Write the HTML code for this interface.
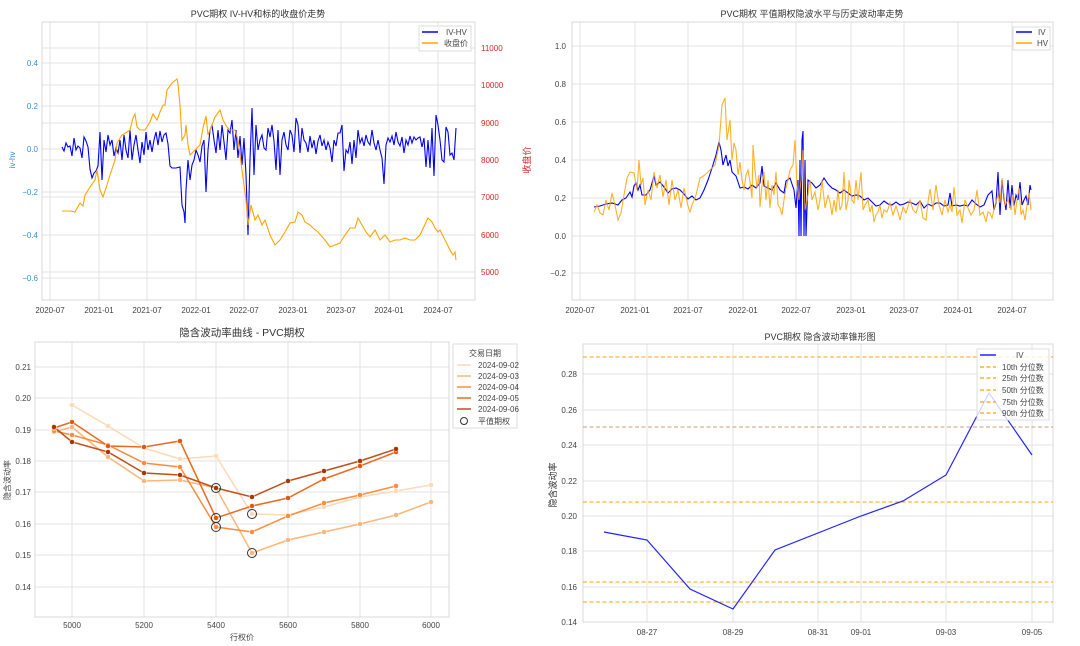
<!DOCTYPE html>
<html><head><meta charset="utf-8"><style>
html,body{margin:0;padding:0;background:#fff;}
svg{display:block;font-family:"Liberation Sans","Noto Sans CJK SC",sans-serif;}
.t{font-size:8px;fill:#444;}
.g{stroke:#e3e3e3;stroke-width:1;fill:none;}
.f{stroke:#d8d8d8;stroke-width:1;fill:none;}
.ti{font-size:9px;fill:#333;text-anchor:middle;}
</style></head><body>
<svg width="1080" height="646" viewBox="0 0 1080 646" xmlns="http://www.w3.org/2000/svg">
<rect width="1080" height="646" fill="#fff"/>

<!-- Panel 1 -->
<text class="ti" x="258" y="17">PVC期权 IV-HV和标的收盘价走势</text>
<g class="g">
<path d="M50 22V300M99 22V300M147 22V300M196 22V300M244 22V300M293 22V300M341 22V300M389 22V300M438 22V300"/>
<path d="M42 63H475M42 106H475M42 149H475M42 192H475M42 235H475M42 278H475"/>
<path d="M42 48H475M42 85H475M42 123H475M42 160H475M42 197H475M42 272H475"/>
</g>
<rect class="f" x="42" y="22" width="433" height="278"/>
<g class="t" style="fill:#3a8fd0" text-anchor="end">
<text x="38" y="66">0.4</text><text x="38" y="109">0.2</text><text x="38" y="152">0.0</text><text x="38" y="195">−0.2</text><text x="38" y="238">−0.4</text><text x="38" y="281">−0.6</text>
</g>
<text class="t" style="fill:#3a8fd0" transform="translate(15,160) rotate(-90)" text-anchor="middle">iv-hv</text>
<g class="t" style="fill:#d62728">
<text x="481" y="51">11000</text><text x="481" y="88">10000</text><text x="481" y="126">9000</text><text x="481" y="163">8000</text><text x="481" y="200">7000</text><text x="481" y="238">6000</text><text x="481" y="275">5000</text>
</g>
<text style="font-size:9px;fill:#d62728" transform="translate(530,160) rotate(-90)" text-anchor="middle">收盘价</text>
<g class="t" text-anchor="middle">
<text x="50" y="313">2020-07</text><text x="99" y="313">2021-01</text><text x="147" y="313">2021-07</text><text x="196" y="313">2022-01</text><text x="244" y="313">2022-07</text><text x="293" y="313">2023-01</text><text x="341" y="313">2023-07</text><text x="389" y="313">2024-01</text><text x="438" y="313">2024-07</text>
</g>
<polyline fill="none" stroke="#0000ff" stroke-width="1.1" points="62,147 64,151 66,143 68,147 70,146 72,156 74,138 76,150 78,146 80,148 82,158 84,137 86,141 88,147 90,169 92,178 94,173 96,171 98,166 100,132 102,180 104,140 106,152 108,135 110,145 112,140 114,156 116,148 118,153 120,140 122,160 124,135 126,150 128,158 130,130 132,160 134,145 136,135 138,150 140,163 142,142 144,155 146,132 148,150 150,140 152,152 154,140 156,132 158,145 160,131 162,142 164,135 166,133 168,144 170,166 172,168 176,168 180,167 182,205 184,212 185,223 186,190 188,160 190,180 192,165 194,160 196,150 198,155 200,162 202,146 204,140 206,192 208,150 210,130 212,125 214,140 216,153 218,130 220,150 222,125 224,142 226,160 228,130 230,133 232,120 234,150 236,130 238,158 240,136 242,165 244,138 246,175 248,235 250,160 252,108 254,175 256,125 258,150 260,140 262,135 264,148 266,150 268,128 270,137 272,125 274,141 276,170 278,130 280,175 282,140 284,132 286,145 288,150 290,130 292,135 294,152 296,118 298,125 300,153 302,128 304,140 306,143 308,152 310,136 312,148 314,140 316,154 318,141 320,135 322,146 324,140 326,150 328,142 330,148 332,162 334,140 336,146 338,133 340,133 342,125 344,171 346,150 348,153 350,142 352,164 354,140 356,158 358,130 360,143 362,138 364,146 366,135 368,142 370,145 372,130 374,143 376,150 378,140 380,150 382,158 384,184 386,145 388,138 390,142 392,136 394,145 396,132 398,142 400,146 402,137 404,153 406,140 408,145 410,136 412,143 414,137 416,140 418,138 420,137 422,147 424,138 426,167 428,140 430,168 432,128 434,176 436,115 438,125 440,140 442,160 444,162 446,127 448,132 450,155 452,153 454,160 456,128"/>
<polyline fill="none" stroke="#ffa500" stroke-width="1.1" points="62,211 70,211 75,212 80,203 83,206 85,195 90,187 95,180 97,170 100,190 103,197 107,185 110,175 115,160 117,143 122,135 127,132 130,130 133,118 135,114 137,127 140,130 145,130 150,122 153,114 157,120 160,112 163,105 165,105 167,90 172,83 177,79 178,84 180,105 182,140 185,135 186,125 188,145 190,155 195,150 200,145 203,128 206,116 208,135 212,125 215,117 220,110 223,120 227,127 230,130 235,130 238,140 242,170 246,200 248,225 251,205 255,220 258,215 262,225 265,220 270,235 275,245 280,240 285,232 290,223 295,222 298,212 302,215 305,222 310,225 313,228 318,232 325,240 330,247 335,245 340,243 345,235 350,228 355,228 358,218 362,225 366,232 370,237 375,230 380,240 385,235 390,242 395,240 400,240 405,238 410,240 415,240 420,235 428,218 432,222 435,228 438,232 440,230 445,240 450,250 453,255 455,252 456,260"/>
<rect x="419" y="26" width="52" height="25" fill="#fff" fill-opacity="0.9" stroke="#ddd"/>
<line x1="422" y1="32" x2="438" y2="32" stroke="#0000ff" stroke-width="1.5"/>
<line x1="422" y1="43" x2="438" y2="43" stroke="#ffa500" stroke-width="1.5"/>
<text class="t" x="446" y="35">IV-HV</text><text class="t" x="444" y="46">收盘价</text>

<!-- Panel 2 -->
<text class="ti" x="812" y="17">PVC期权 平值期权隐波水平与历史波动率走势</text>
<g class="g">
<path d="M580 22V300M635 22V300M688 22V300M743 22V300M796 22V300M851 22V300M904 22V300M958 22V300M1012 22V300"/>
<path d="M572 46H1053M572 84H1053M572 122H1053M572 160H1053M572 198H1053M572 236H1053M572 273H1053"/>
</g>
<rect class="f" x="572" y="22" width="481" height="278"/>
<g class="t" text-anchor="end">
<text x="566" y="49">1.0</text><text x="566" y="87">0.8</text><text x="566" y="125">0.6</text><text x="566" y="163">0.4</text><text x="566" y="201">0.2</text><text x="566" y="239">0.0</text><text x="566" y="276">−0.2</text>
</g>
<g class="t" text-anchor="middle">
<text x="580" y="313">2020-07</text><text x="635" y="313">2021-01</text><text x="688" y="313">2021-07</text><text x="743" y="313">2022-01</text><text x="796" y="313">2022-07</text><text x="851" y="313">2023-01</text><text x="904" y="313">2023-07</text><text x="958" y="313">2024-01</text><text x="1012" y="313">2024-07</text>
</g>
<polyline fill="none" stroke="#0000ff" stroke-width="1.1" points="594,207 600,206 606,204 612,203 618,205 622,200 626,198 630,192 632,197 634,186 636,183 638,190 640,185 642,195 646,195 650,190 654,176 656,185 660,182 664,187 668,193 672,189 676,188 680,190 684,194 688,199 692,196 696,200 700,198 704,190 708,180 712,168 716,155 719,142 721,150 723,165 726,155 728,166 730,160 732,172 736,176 740,188 744,187 748,189 752,185 756,188 760,183 762,166 764,186 768,188 772,190 776,183 780,190 784,193 786,181 790,178 794,190 796,208 798,180 799,236 800,160 801,236 802,140 803,131 804,236 805,160 806,236 808,180 812,183 816,188 820,185 824,178 828,184 832,188 836,190 840,193 844,190 848,193 852,196 856,195 860,196 864,200 868,198 872,202 876,206 880,205 884,201 888,204 892,205 896,202 900,205 904,204 908,202 912,203 916,205 920,201 924,208 928,204 932,206 936,203 940,203 944,206 948,205 950,193 952,206 956,205 960,206 964,205 968,206 972,200 976,204 980,207 984,205 988,195 992,191 994,210 996,203 998,172 1000,215 1002,180 1004,199 1006,210 1008,180 1010,208 1012,185 1014,206 1016,195 1018,200 1020,182 1022,205 1024,200 1026,196 1028,205 1030,185 1031,190"/>
<polyline fill="none" stroke="#ffa500" stroke-opacity="0.85" stroke-width="1.1" points="594,212 597,205 600,213 603,215 606,200 609,210 612,193 615,205 618,220 621,213 624,195 627,178 630,172 634,173 637,190 639,160 641,185 643,178 645,205 648,190 651,200 654,172 657,188 660,175 663,197 666,180 669,205 672,180 675,200 678,190 681,208 684,188 688,206 690,212 692,205 696,195 700,178 705,175 710,170 715,165 719,145 722,105 725,98 727,140 730,120 732,160 734,143 736,150 738,175 740,162 742,180 744,190 746,175 748,170 750,182 752,198 753,145 755,170 757,188 759,175 760,207 762,185 764,172 766,200 768,180 770,208 772,185 774,195 776,172 778,205 780,208 782,215 784,200 786,188 788,180 790,170 793,165 795,140 797,185 799,200 801,180 803,150 805,210 808,195 810,180 812,200 815,192 818,210 820,200 822,180 825,208 828,195 830,202 832,215 834,200 836,212 838,190 840,210 842,205 844,172 846,210 848,200 849,180 852,200 854,203 856,180 858,200 861,172 863,210 865,205 868,200 870,212 872,205 874,222 876,215 878,212 880,205 882,218 884,210 887,212 890,203 893,215 896,206 898,212 900,220 903,207 906,213 910,200 913,210 916,213 920,200 923,218 926,220 928,202 930,189 933,210 936,185 939,205 942,215 945,200 948,212 950,205 952,212 954,187 957,215 960,210 962,223 965,200 968,208 971,215 974,210 977,190 980,215 983,212 986,222 988,212 990,213 992,218 995,205 998,195 1000,203 1002,178 1005,205 1008,200 1011,210 1013,195 1015,215 1017,200 1019,188 1021,215 1023,210 1025,220 1027,205 1029,193 1031,210"/>
<rect x="1013" y="27" width="37" height="23" fill="#fff" fill-opacity="0.9" stroke="#ddd"/>
<line x1="1016" y1="32" x2="1032" y2="32" stroke="#0000ff" stroke-width="1.5"/>
<line x1="1016" y1="43" x2="1032" y2="43" stroke="#ffa500" stroke-width="1.5"/>
<text class="t" x="1038" y="35">IV</text><text class="t" x="1037" y="46">HV</text>

<!-- Panel 3 -->
<text class="ti" style="font-size:10.5px" x="242" y="336">隐含波动率曲线 - PVC期权</text>
<g class="g">
<path d="M72 342V617M144 342V617M216 342V617M288 342V617M360 342V617M431 342V617"/>
<path d="M35 367H449M35 398H449M35 430H449M35 461H449M35 492H449M35 524H449M35 555H449M35 587H449"/>
</g>
<rect class="f" x="35" y="342" width="414" height="275"/>
<g class="t" text-anchor="end">
<text x="31" y="370">0.21</text><text x="31" y="401">0.20</text><text x="31" y="433">0.19</text><text x="31" y="464">0.18</text><text x="31" y="495">0.17</text><text x="31" y="527">0.16</text><text x="31" y="558">0.15</text><text x="31" y="590">0.14</text>
</g>
<g class="t" text-anchor="middle">
<text x="72" y="628">5000</text><text x="144" y="628">5200</text><text x="216" y="628">5400</text><text x="288" y="628">5600</text><text x="360" y="628">5800</text><text x="431" y="628">6000</text>
</g>
<text class="t" x="242" y="640" text-anchor="middle">行权价</text>
<text class="t" transform="translate(10,480) rotate(-90)" text-anchor="middle">隐含波动率</text>
<g fill="none" stroke-width="1.5">
<polyline stroke="#fdd9b5" points="72,405 108,426 144,448 180,459 216,456 252,514 288,515 324,507 360,497 396,491 431,485"/>
<polyline stroke="#fdb57a" points="54,432 72,427 108,457 144,481 180,480 216,488 252,553 288,540 324,532 360,524 396,515 431,502"/>
<polyline stroke="#fd8d3c" points="54,431 72,435 108,445 144,463 180,467 216,527 252,532 288,516 324,503 360,495 396,486"/>
<polyline stroke="#ec6a20" points="54,428 72,422 108,446 144,447 180,441 216,518 252,506 288,498 324,479 360,466 396,452"/>
<polyline stroke="#c0501a" points="54,427 72,442 108,452 144,473 180,475 216,488 252,497 288,481 324,471 360,461 396,449"/>
</g>
<g stroke="#fff" stroke-width="0.5">
<g fill="#fdd9b5"><circle cx="72" cy="405" r="2.5"/><circle cx="108" cy="426" r="2.5"/><circle cx="144" cy="448" r="2.5"/><circle cx="180" cy="459" r="2.5"/><circle cx="216" cy="456" r="2.5"/><circle cx="252" cy="514" r="2.5"/><circle cx="288" cy="515" r="2.5"/><circle cx="324" cy="507" r="2.5"/><circle cx="360" cy="497" r="2.5"/><circle cx="396" cy="491" r="2.5"/><circle cx="431" cy="485" r="2.5"/></g>
<g fill="#fdb57a"><circle cx="54" cy="432" r="2.5"/><circle cx="72" cy="427" r="2.5"/><circle cx="108" cy="457" r="2.5"/><circle cx="144" cy="481" r="2.5"/><circle cx="180" cy="480" r="2.5"/><circle cx="216" cy="488" r="2.5"/><circle cx="252" cy="553" r="2.5"/><circle cx="288" cy="540" r="2.5"/><circle cx="324" cy="532" r="2.5"/><circle cx="360" cy="524" r="2.5"/><circle cx="396" cy="515" r="2.5"/><circle cx="431" cy="502" r="2.5"/></g>
<g fill="#fd8d3c"><circle cx="54" cy="431" r="2.5"/><circle cx="72" cy="435" r="2.5"/><circle cx="108" cy="445" r="2.5"/><circle cx="144" cy="463" r="2.5"/><circle cx="180" cy="467" r="2.5"/><circle cx="216" cy="527" r="2.5"/><circle cx="252" cy="532" r="2.5"/><circle cx="288" cy="516" r="2.5"/><circle cx="324" cy="503" r="2.5"/><circle cx="360" cy="495" r="2.5"/><circle cx="396" cy="486" r="2.5"/></g>
<g fill="#e6550d"><circle cx="54" cy="428" r="2.5"/><circle cx="72" cy="422" r="2.5"/><circle cx="108" cy="446" r="2.5"/><circle cx="144" cy="447" r="2.5"/><circle cx="180" cy="441" r="2.5"/><circle cx="216" cy="518" r="2.5"/><circle cx="252" cy="506" r="2.5"/><circle cx="288" cy="498" r="2.5"/><circle cx="324" cy="479" r="2.5"/><circle cx="360" cy="466" r="2.5"/><circle cx="396" cy="452" r="2.5"/></g>
<g fill="#a63603"><circle cx="54" cy="427" r="2.5"/><circle cx="72" cy="442" r="2.5"/><circle cx="108" cy="452" r="2.5"/><circle cx="144" cy="473" r="2.5"/><circle cx="180" cy="475" r="2.5"/><circle cx="216" cy="488" r="2.5"/><circle cx="252" cy="497" r="2.5"/><circle cx="288" cy="481" r="2.5"/><circle cx="324" cy="471" r="2.5"/><circle cx="360" cy="461" r="2.5"/><circle cx="396" cy="449" r="2.5"/></g>
</g>
<g fill="none" stroke="#333" stroke-width="1">
<circle cx="216" cy="488" r="4.5"/><circle cx="216" cy="518" r="4.5"/><circle cx="216" cy="527" r="4.5"/><circle cx="252" cy="514" r="4.5"/><circle cx="252" cy="553" r="4.5"/>
</g>
<rect x="453" y="344" width="64" height="84" fill="#fff" stroke="#ddd"/>
<text class="t" x="485" y="356" text-anchor="middle">交易日期</text>
<g stroke-width="1.5">
<line x1="457" y1="365" x2="471" y2="365" stroke="#fdd9b5"/>
<line x1="457" y1="376" x2="471" y2="376" stroke="#fdb57a"/>
<line x1="457" y1="387" x2="471" y2="387" stroke="#fd8d3c"/>
<line x1="457" y1="398" x2="471" y2="398" stroke="#ec6a20"/>
<line x1="457" y1="409" x2="471" y2="409" stroke="#c0501a"/>
</g>
<circle cx="464" cy="421" r="3.5" fill="none" stroke="#333"/>
<g class="t"><text x="478" y="368">2024-09-02</text><text x="478" y="379">2024-09-03</text><text x="478" y="390">2024-09-04</text><text x="478" y="401">2024-09-05</text><text x="478" y="412">2024-09-06</text><text x="478" y="424">平值期权</text></g>

<!-- Panel 4 -->
<text class="ti" x="820" y="340">PVC期权 隐含波动率锥形图</text>
<g class="g">
<path d="M647 344V622M733 344V622M818 344V622M861 344V622M946 344V622M1032 344V622"/>
<path d="M583 374H1053M583 410H1053M583 445H1053M583 481H1053M583 516H1053M583 551H1053M583 587H1053"/>
</g>
<rect class="f" x="583" y="344" width="470" height="278"/>
<g class="t" text-anchor="end">
<text x="577" y="377">0.28</text><text x="577" y="413">0.26</text><text x="577" y="448">0.24</text><text x="577" y="484">0.22</text><text x="577" y="519">0.20</text><text x="577" y="554">0.18</text><text x="577" y="590">0.16</text><text x="577" y="625">0.14</text>
</g>
<g class="t" text-anchor="middle">
<text x="647" y="635">08-27</text><text x="733" y="635">08-29</text><text x="818" y="635">08-31</text><text x="861" y="635">09-01</text><text x="946" y="635">09-03</text><text x="1032" y="635">09-05</text>
</g>
<text style="font-size:9px;fill:#333" transform="translate(556,485) rotate(-90)" text-anchor="middle">隐含波动率</text>
<g stroke="#ffa500" stroke-width="1.1" stroke-dasharray="4,2.5">
<line x1="583" y1="357" x2="1053" y2="357"/><line x1="583" y1="427" x2="1053" y2="427" stroke="#c8a070"/><line x1="583" y1="502" x2="1053" y2="502"/><line x1="583" y1="582" x2="1053" y2="582"/><line x1="583" y1="602" x2="1053" y2="602"/>
</g>
<polyline fill="none" stroke="#2222ff" stroke-width="1.2" points="604,532 647,540 690,589 733,609 775,550 861,516 903,501 946,475 989,393 1032,455"/>
<rect x="977" y="349" width="72" height="71" fill="#fff" fill-opacity="0.8" stroke="#ddd"/>
<line x1="980" y1="355" x2="996" y2="355" stroke="#2222ff" stroke-width="1.5"/>
<g stroke="#ffa500" stroke-width="1.2" stroke-dasharray="4,2.5">
<line x1="980" y1="367" x2="996" y2="367"/><line x1="980" y1="378" x2="996" y2="378"/><line x1="980" y1="390" x2="996" y2="390"/><line x1="980" y1="402" x2="996" y2="402"/><line x1="980" y1="413" x2="996" y2="413"/>
</g>
<g class="t"><text x="1016" y="358">IV</text><text x="1002" y="370">10th 分位数</text><text x="1002" y="381">25th 分位数</text><text x="1002" y="393">50th 分位数</text><text x="1002" y="405">75th 分位数</text><text x="1002" y="416">90th 分位数</text></g>
</svg>
</body></html>
